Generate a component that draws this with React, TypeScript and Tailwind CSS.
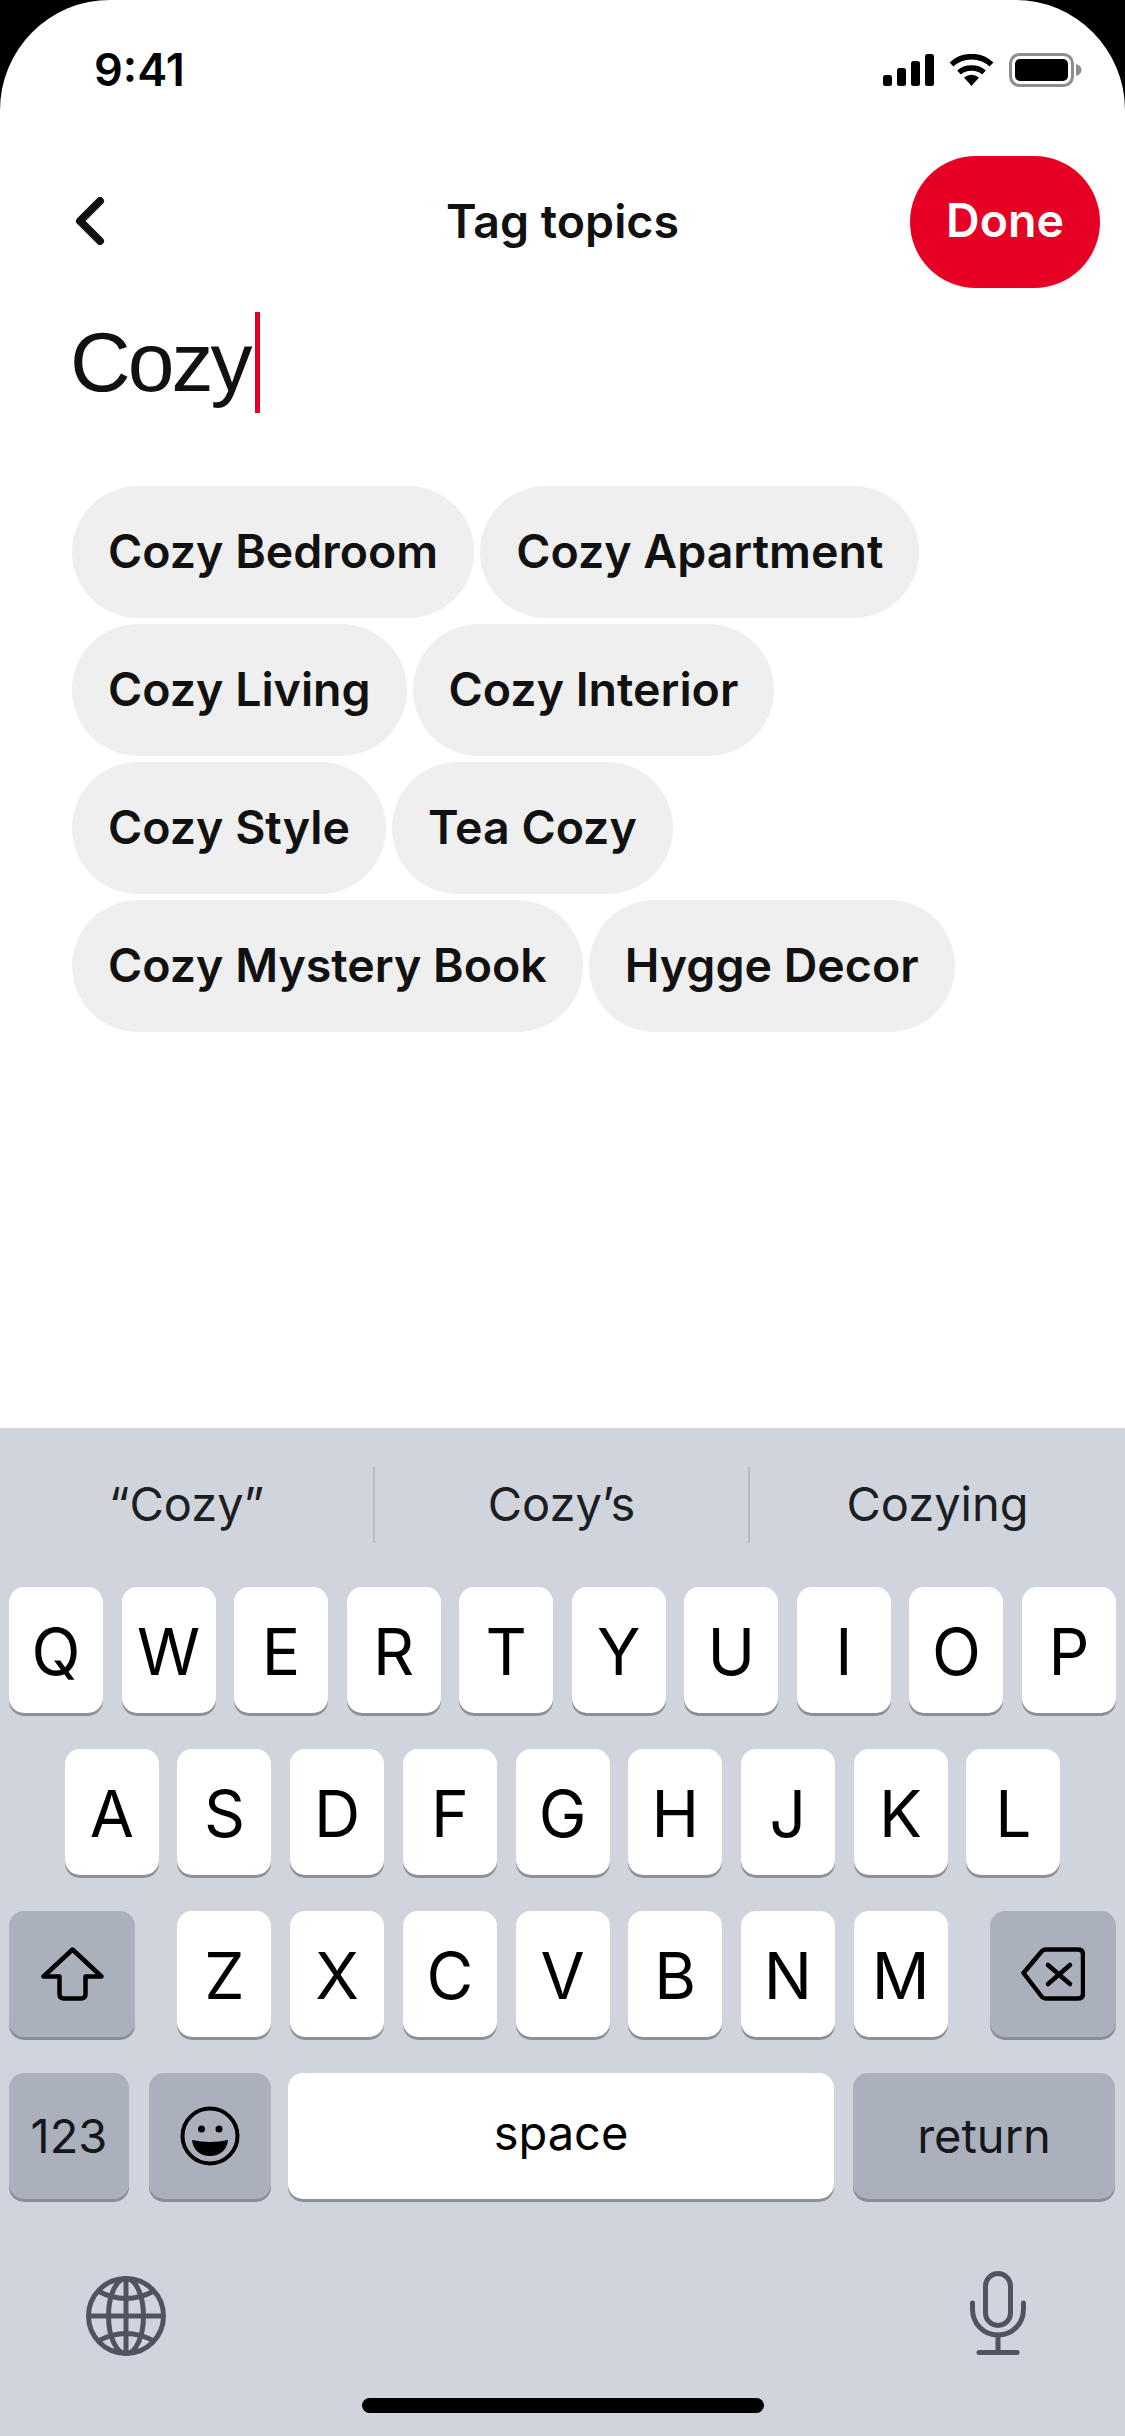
import React from "react";

const chipRows = ["Cozy Bedroom","Cozy Apartment","Cozy Living","Cozy Interior","Cozy Style","Tea Cozy","Cozy Mystery Book","Hygge Decor"];

function Key({ label }: { label: string }) {
  return (
    <div className="w-[94px] h-[126px] rounded-[15px] bg-white shadow-[0_3px_0_#8e9096] flex items-center justify-center text-[64px] leading-none text-black pt-[3px]">
      {label}
    </div>
  );
}

function Special({ w, children }: { w: string; children: React.ReactNode }) {
  return (
    <div className={`${w} h-[126px] rounded-[15px] bg-[#abb1bc] shadow-[0_3px_0_#8a8d95] flex items-center justify-center text-[#15171b]`}>
      {children}
    </div>
  );
}

export default function App() {
  return (
    <div className="w-[1125px] h-[2436px] bg-black font-['Inter',sans-serif] text-[#111111]">
      <div className="w-full h-full bg-white rounded-t-[110px] overflow-hidden flex flex-col">
        {/* status bar */}
        <div className="h-[110px] shrink-0 flex items-start justify-between pt-[47px] pl-[94px] pr-[43px]">
          <span className="text-[45px] leading-[45px] font-semibold text-black">9:41</span>
          <div className="flex items-center gap-[15px] pt-[6px]">
            <svg width="51" height="32" viewBox="0 0 51 32" fill="black">
              <rect x="0" y="21" width="9" height="11" rx="2.5" />
              <rect x="14" y="14" width="9" height="18" rx="2.5" />
              <rect x="28" y="7" width="9" height="25" rx="2.5" />
              <rect x="42" y="0" width="9" height="32" rx="2.5" />
            </svg>
            <svg width="45" height="32" viewBox="0 0 45 32" fill="none" stroke="black" strokeWidth="5.5">
              <path d="M2.5 10.5C13.5 0 31.5 0 42.500 10.500" />
              <path d="M10 18.500C16.500 12.500 28.500 12.500 35 18.500" />
              <path d="M15 23.500Q22.500 18 30 23.500L22.500 32Z" fill="black" stroke="none" />
            </svg>
            <svg width="73" height="34" viewBox="0 0 73 34" fill="none">
              <rect x="1.500" y="1.500" width="62" height="31" rx="9" stroke="#8e8e8e" strokeWidth="3" />
              <rect x="6" y="6" width="53" height="22" rx="5" fill="black" />
              <path d="M67 11C70.500 12 72.500 14 72.500 17C72.500 20 70.500 22 67 23Z" fill="#8e8e8e" />
            </svg>
          </div>
        </div>

        {/* header */}
        <div className="mt-[46px] h-[132px] shrink-0 grid grid-cols-[1fr_auto_1fr] items-center px-[25px]">
          <svg className="ml-[50px] mb-[2px]" width="30" height="48" viewBox="0 0 30 48" fill="none" stroke="#111" strokeWidth="8" strokeLinecap="round" strokeLinejoin="round">
            <path d="M25 4L5 24L25 44" />
          </svg>
          <div className="text-[46.5px] leading-none font-semibold pb-[2px]">Tag topics</div>
          <div className="justify-self-end w-[190px] h-[132px] rounded-full bg-[#e60023] text-white text-[46.5px] font-semibold flex items-center justify-center pb-[2px]">Done</div>
        </div>

        {/* input */}
        <div className="mt-[24px] h-[101px] shrink-0 flex items-center pl-[70px]">
          <span className="text-[84px] leading-none tracking-[-3px] pb-[2px] font-['Liberation_Sans',sans-serif]">Cozy</span>
          <div className="w-[5px] h-[101px] bg-[#e60023] ml-[6px]" />
        </div>

        {/* chips */}
        <div className="mt-[73px] h-[942px] shrink-0 pl-[72px] pr-[71px] flex flex-wrap content-start gap-[6px]">
          {chipRows.map((c) => (
            <div key={c} className="h-[132px] px-[36px] pb-[2px] rounded-full bg-[#efefef] flex items-center text-[46.5px] font-semibold leading-none">{c}</div>
          ))}
        </div>

        {/* keyboard */}
        <div className="flex-1 bg-[#d0d4dc] flex flex-col">
          <div className="h-[159px] shrink-0 grid grid-cols-[373px_377px_1fr] items-center pb-[6px] text-[47px] text-[#1c1e22]">
            <div className="h-[76px] flex items-center justify-center">“Cozy”</div>
            <div className="h-[76px] flex items-center justify-center border-x-2 border-[#b8bcc5]">Cozy’s</div>
            <div className="h-[76px] flex items-center justify-center">Cozying</div>
          </div>

          <div className="flex justify-between px-[9px]">
            {"QWERTYUIOP".split("").map((k) => <Key key={k} label={k} />)}
          </div>
          <div className="mt-[36px] flex justify-center gap-[18.7px]">
            {"ASDFGHJKL".split("").map((k) => <Key key={k} label={k} />)}
          </div>
          <div className="mt-[36px] flex justify-between px-[9px]">
            <Special w="w-[126px]">
              <svg width="63" height="54" viewBox="0 0 63 54" fill="none" stroke="black" strokeWidth="4.500" strokeLinejoin="round">
                <path d="M31.500 2.500L2.500 29.500H18.500V47Q18.500 51.500 23 51.500H40Q44.500 51.500 44.500 47V29.500H60.500Z" />
              </svg>
            </Special>
            <div className="flex gap-[18.7px]">
              {"ZXCVBNM".split("").map((k) => <Key key={k} label={k} />)}
            </div>
            <Special w="w-[126px]">
              <svg width="64" height="54" viewBox="0 0 64 54" fill="none" stroke="black" strokeWidth="4.500" strokeLinejoin="round" strokeLinecap="round">
                <path d="M2.500 26L21 4Q22.500 2.500 25 2.500H57Q62 2.500 62 7.500V46.500Q62 51.500 57 51.500H25Q22.500 51.500 21 50Z" />
                <path d="M27 18L49 37M49 18L27 37" />
              </svg>
            </Special>
          </div>
          <div className="mt-[36px] flex px-[9px]">
            <Special w="w-[120px] text-[47px]">123</Special>
            <div className="ml-[20px]">
              <Special w="w-[122px]">
                <svg width="60" height="60" viewBox="0 0 60 60">
                  <circle cx="30" cy="30" r="27.500" fill="none" stroke="black" strokeWidth="4" />
                  <circle cx="21.500" cy="23" r="3.500" />
                  <circle cx="39" cy="23" r="3.500" />
                  <path d="M12 34Q30 38 48 34C47 44 40 50 30 50C20 50 13 44 12 34Z" />
                </svg>
              </Special>
            </div>
            <div className="ml-[17px] w-[546px] h-[126px] rounded-[15px] bg-white shadow-[0_3px_0_#8e9096] flex items-center justify-center text-[47px] text-black pb-[6px]">space</div>
            <div className="ml-[19px]">
              <Special w="w-[262px] text-[47px]">return</Special>
            </div>
          </div>

          <div className="mt-[72px] flex items-start justify-between pl-[86px] pr-[99px]">
            <svg className="mt-[5px]" width="80" height="80" viewBox="0 0 80 80" fill="none" stroke="#50545e" strokeWidth="5">
              <circle cx="40" cy="40" r="37.500" />
              <ellipse cx="40" cy="40" rx="17.500" ry="37.500" />
              <path d="M40 2.500V77.500M2.500 40H77.500" />
              <path d="M12 15Q40 30 68 15M12 65Q40 50 68 65" />
            </svg>
            <svg width="56" height="84" viewBox="0 0 56 84" fill="none" stroke="#50545e" strokeWidth="5" strokeLinecap="round">
              <rect x="15.500" y="2.500" width="25" height="52" rx="12.500" />
              <path d="M2.500 32V38C2.500 52 13 64 28 64C43 64 53.500 52 53.500 38V32" />
              <path d="M28 64V81M9 81.500H47" />
            </svg>
          </div>

          <div className="mt-[42px] w-[402px] h-[15px] self-center rounded-full bg-black" />
        </div>
      </div>
    </div>
  );
}
